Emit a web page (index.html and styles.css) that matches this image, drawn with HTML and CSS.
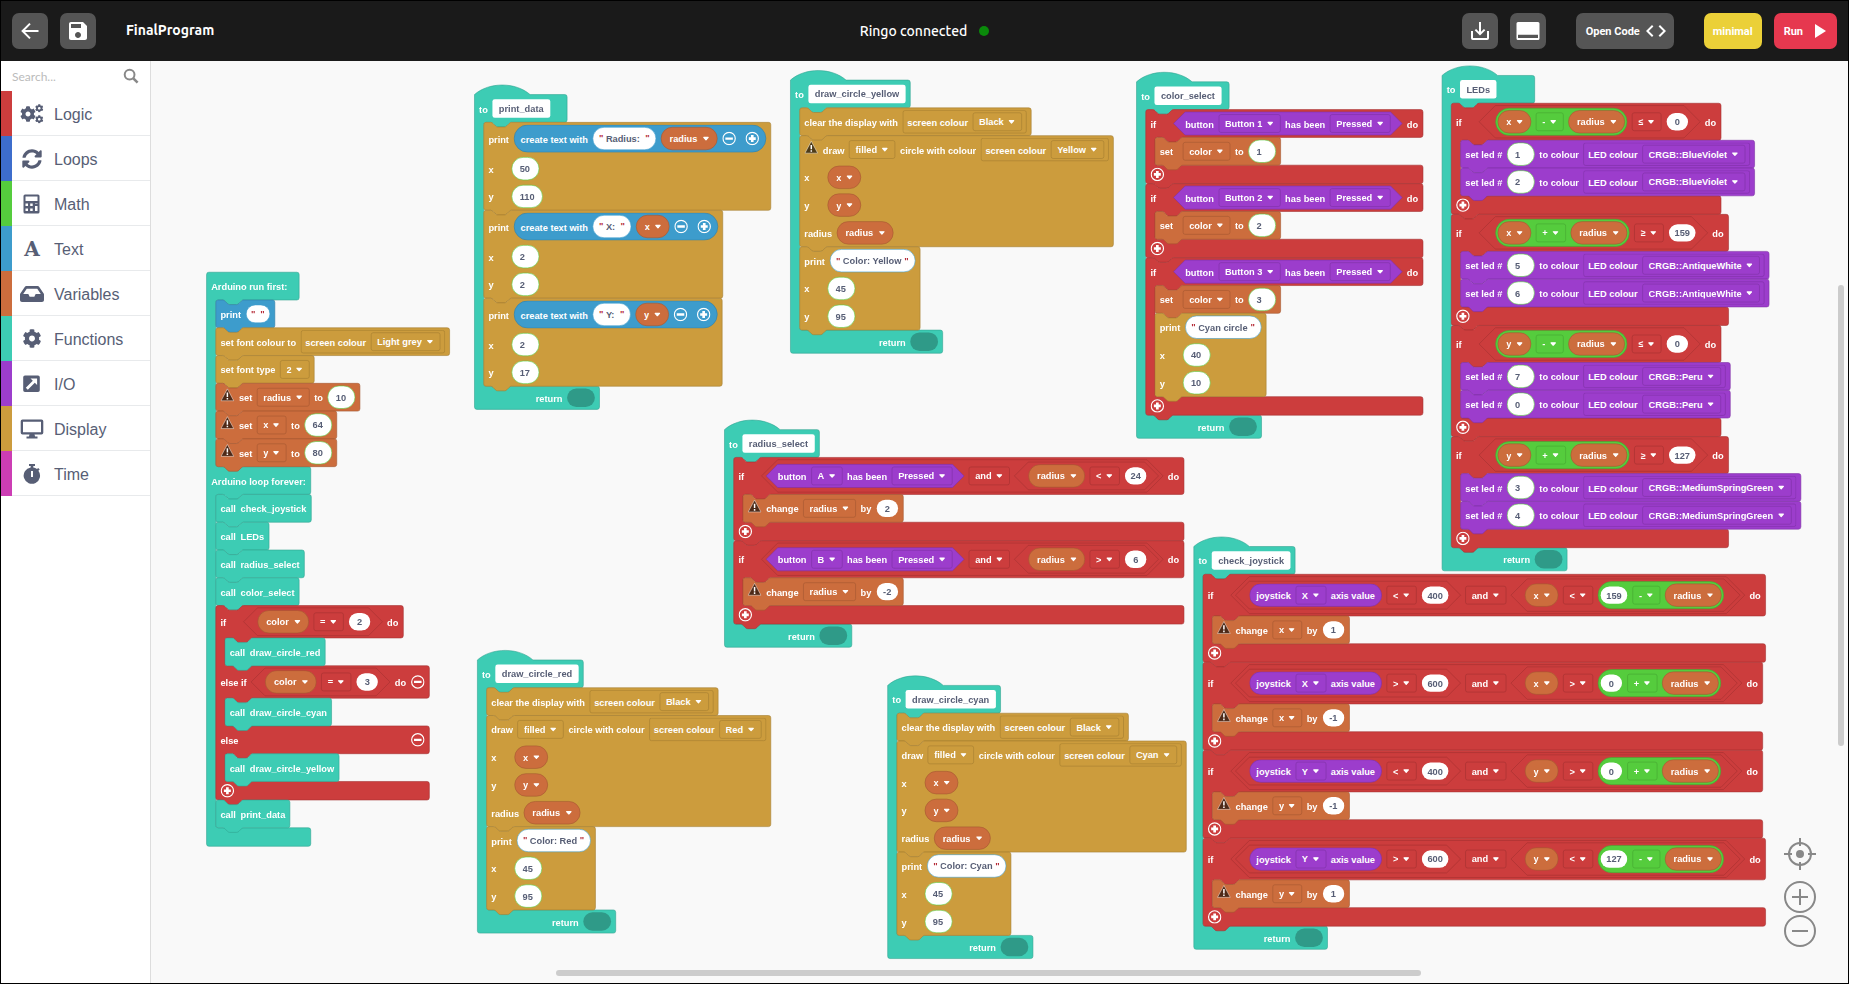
FILE: index.html
```html
<!DOCTYPE html>
<html lang="en">
<head>
<meta charset="utf-8">
<meta name="viewport" content="width=device-width, initial-scale=1">
<title>FinalProgram</title>
<link rel="stylesheet" href="styles.css">
</head>
<body>
<svg class="defs" aria-hidden="true">
  <symbol id="cog" viewBox="0 0 512 512"><path d="M487.4 315.7l-42.6-24.6c4.3-23.2 4.3-47 0-70.2l42.6-24.6c4.9-2.8 7.1-8.6 5.5-14-11.1-35.6-30-67.8-54.7-94.6-3.8-4.1-10-5.1-14.8-2.3L380.8 110c-17.9-15.4-38.5-27.3-60.8-35.1V25.8c0-5.6-3.9-10.5-9.4-11.7-36.7-8.2-74.3-7.8-109.2 0-5.5 1.2-9.4 6.1-9.4 11.7V75c-22.2 7.9-42.8 19.8-60.8 35.1L88.7 85.5c-4.9-2.8-11-1.9-14.8 2.3-24.7 26.7-43.6 58.9-54.7 94.6-1.7 5.4.6 11.2 5.5 14L67.3 221c-4.3 23.2-4.3 47 0 70.2l-42.6 24.6c-4.9 2.8-7.1 8.6-5.5 14 11.1 35.6 30 67.8 54.7 94.6 3.8 4.1 10 5.1 14.8 2.3l42.6-24.6c17.9 15.4 38.5 27.3 60.8 35.1v49.2c0 5.6 3.9 10.5 9.4 11.7 36.7 8.2 74.3 7.8 109.2 0 5.5-1.2 9.4-6.1 9.4-11.7v-49.2c22.2-7.9 42.8-19.8 60.8-35.1l42.6 24.6c4.9 2.8 11 1.9 14.8-2.3 24.7-26.7 43.6-58.9 54.7-94.6 1.5-5.5-.7-11.3-5.6-14.1zM256 336c-44.1 0-80-35.9-80-80s35.9-80 80-80 80 35.9 80 80-35.9 80-80 80z"/></symbol>
  <symbol id="plus" viewBox="0 0 24 24"><circle cx="12" cy="12" r="10.6" fill="none" stroke="#fff" stroke-width="2"/><path d="M12 6v12M6 12h12" stroke="#fff" stroke-width="4.6"/></symbol>
  <symbol id="minus" viewBox="0 0 24 24"><circle cx="12" cy="12" r="10.6" fill="none" stroke="#fff" stroke-width="2"/><path d="M5.5 12h13" stroke="#fff" stroke-width="4"/></symbol>
  <symbol id="warning" viewBox="0 0 24 24"><path d="M12 1.6 23 22.2H1z" fill="#000" fill-opacity=".62" stroke="#fff" stroke-opacity=".6" stroke-width="1.3" stroke-linejoin="round"/><path d="M12 8v7.500M12 17.2v2.8" stroke="#fff" stroke-width="2.6"/></symbol>
</svg>

<header class="topbar">
  <div class="topbar-left">
    <button class="tool" aria-label="Back"><svg viewBox="0 0 24 24" width="24" height="24"><path d="M20.5 12H5M12 4.6 4.6 12l7.4 7.4" fill="none" stroke="currentColor" stroke-width="2"/></svg></button>
    <button class="tool" aria-label="Save"><svg viewBox="0 0 24 24" width="24" height="24"><path fill="currentColor" d="M17 3H5c-1.11 0-2 .9-2 2v14c0 1.1.89 2 2 2h14c1.1 0 2-.9 2-2V7l-4-4zm-5 16c-1.66 0-3-1.34-3-3s1.34-3 3-3 3 1.34 3 3-1.34 3-3 3zm3-10H5V5h10v4z"/></svg></button>
    <h1 class="title">FinalProgram</h1>
  </div>
  <p class="status">Ringo connected <span class="dot"></span></p>
  <div class="topbar-right">
    <div class="group">
      <button class="tool" aria-label="Download"><svg viewBox="0 0 24 24" width="24" height="24"><path d="M4 12v7.2q0 .8.8.8h14.4q.8 0 .8-.8V12M12 3v12M7.4 10.6 12 15.2l4.6-4.6" fill="none" stroke="currentColor" stroke-width="2"/></svg></button>
      <button class="tool" aria-label="Toggle panel"><svg viewBox="0 0 24 24" width="24" height="24"><path fill="currentColor" fill-rule="evenodd" d="M2 3h20q1.500 0 1.500 1.500v15q0 1.500-1.500 1.500H2Q.5 21 .5 19.500v-15Q.5 3 2 3zm0 12.800v3.200h20v-3.200z"/></svg></button>
    </div>
    <button class="tool wide">Open Code <svg viewBox="0 0 24 24" width="24" height="24"><path fill="currentColor" d="M9.400 16.600L4.800 12l4.600-4.600L8 6l-6 6 6 6 1.400-1.400zm5.200 0l4.600-4.600-4.600-4.600L16 6l6 6-6 6-1.400-1.400z"/></svg></button>
    <div class="group">
      <button class="tool minimal">minimal</button>
      <button class="tool wide run">Run <svg viewBox="0 0 24 24" width="24" height="24"><path fill="currentColor" d="M8 5v14l11-7z"/></svg></button>
    </div>
  </div>
</header>

<div class="main">
  <aside class="sidebar">
    <form class="search" role="search">
      <input type="search" aria-label="Search blocks" placeholder="Search...">
      <button type="button" aria-label="Search"><svg viewBox="0 0 16 16" width="16" height="16"><circle cx="6.600" cy="6.600" r="4.900" fill="none" stroke="#888" stroke-width="2"/><path d="m10.300 10.300 4.300 4.300" stroke="#888" stroke-width="2.600"/></svg></button>
    </form>
    <nav class="categories" aria-label="Block categories">
      <a href="#logic" class="category c-logic"><svg viewBox="0 0 24 20"><use href="#cog" x="0" y="2" width="16" height="16"/><use href="#cog" x="15" y="0" width="8.500" height="8.500"/><use href="#cog" x="15" y="11" width="8.500" height="8.500"/></svg><span>Logic</span></a>
      <a href="#loops" class="category c-loops"><svg viewBox="-51 0 614 512"><path d="M370.720 133.280C339.458 104.008 298.888 87.962 255.848 88c-77.458.068-144.328 53.178-162.791 126.850-1.344 5.363-6.122 9.150-11.651 9.150H24.103c-7.498 0-13.194-6.807-11.807-14.176C33.933 94.924 134.813 8 256 8c66.448 0 126.791 26.136 171.315 68.685L463.030 40.970C478.149 25.851 504 36.559 504 57.941V192c0 13.255-10.745 24-24 24H345.941c-21.382 0-32.090-25.851-16.971-40.971l41.750-41.749zM32 296h134.059c21.382 0 32.090 25.851 16.971 40.971l-41.750 41.750c31.262 29.273 71.835 45.319 114.876 45.280 77.418-.070 144.315-53.144 162.787-126.849 1.344-5.363 6.122-9.150 11.651-9.150h57.304c7.498 0 13.194 6.807 11.807 14.176C478.067 417.076 377.187 504 256 504c-66.448 0-126.791-26.136-171.315-68.685L48.970 471.030C33.851 486.149 8 475.441 8 454.059V320c0-13.255 10.745-24 24-24z"/></svg><span>Loops</span></a>
      <a href="#math" class="category c-math"><svg viewBox="0 0 24 20"><path fill-rule="evenodd" d="M5 .5h13q1.500 0 1.500 1.500v16q0 1.500-1.500 1.500H5q-1.500 0-1.500-1.500V2Q3.500.5 5 .5zM5.500 2.500V7h12V2.500zM5.500 9.500V12H8V9.500zM10.200 9.500V12h2.500V9.500zM15 9.500V12h2.500V9.500zM5.500 14.500V17H8v-2.500zM10.200 14.500V17h2.500v-2.500zM15 10v7h2.500v-7z"/></svg><span>Math</span></a>
      <a href="#text" class="category c-text"><b class="letter" aria-hidden="true">A</b><span>Text</span></a>
      <a href="#variables" class="category c-variables"><svg viewBox="0 16 576 480"><path d="M567.938 243.908L462.250 85.374A48.003 48.003 0 0 0 422.311 64H153.689a48 48 0 0 0-39.938 21.374L8.062 243.908A47.994 47.994 0 0 0 0 270.533V400c0 26.510 21.490 48 48 48h480c26.510 0 48-21.490 48-48V270.533a47.994 47.994 0 0 0-8.062-26.625zM162.252 128h251.497l85.333 128H376l-32 64H232l-32-64H76.918l85.334-128z"/></svg><span>Variables</span></a>
      <a href="#functions" class="category c-functions"><svg viewBox="0 0 24 20"><use href="#cog" x="2.500" y="0" width="19" height="19"/></svg><span>Functions</span></a>
      <a href="#io" class="category c-io"><svg viewBox="0 0 24 20"><path fill-rule="evenodd" d="M5 1.500h13q1.800 0 1.800 1.800v13q0 1.800-1.800 1.800H5q-1.800 0-1.800-1.800v-13Q3.200 1.500 5 1.500zM10.500 4.500l2.300 2.300-7 7 2 2 7-7 2.300 2.300V4.500z"/></svg><span>I/O</span></a>
      <a href="#display" class="category c-display"><svg viewBox="0 0 24 20"><path fill-rule="evenodd" d="M2.500.5h19Q23.300.5 23.300 2.300v11.500q0 1.800-1.800 1.800h-7l.6 2h2.400v1.900H6.500v-1.900h2.400l.6-2h-7q-1.800 0-1.800-1.800V2.300Q.7.5 2.500.5zM3 2.800v10.500h18V2.800z"/></svg><span>Display</span></a>
      <a href="#time" class="category c-time"><svg viewBox="0 0 24 20"><path fill-rule="evenodd" d="M9 0h6v2h-1.700v1.500a8 8 0 0 1 3.700 1.600l1.200-1.200 1.500 1.500-1.300 1.300A8.200 8.200 0 1 1 10.700 3.500V2H9zM11 7v6h2V7z"/></svg><span>Time</span></a>
    </nav>
  </aside>

  <main class="workspace">
    <div class="canvas" id="canvas"></div>
    <div class="scroll-y"></div>
    <div class="scroll-x"></div>
    <div class="controls">
      <button aria-label="Center blocks"><svg viewBox="0 0 32 32" width="32" height="32"><circle cx="16" cy="16" r="11"/><path d="M16 0v8M16 24v8M0 16h8M24 16h8"/><circle class="solid" cx="16" cy="16" r="4"/></svg></button>
      <button aria-label="Zoom in"><svg viewBox="0 0 32 32" width="32" height="32"><circle cx="16" cy="16" r="15"/><path d="M16 8v16M8 16h16"/></svg></button>
      <button aria-label="Zoom out"><svg viewBox="0 0 32 32" width="32" height="32"><circle cx="16" cy="16" r="15"/><path d="M8 16h16"/></svg></button>
    </div>
  </main>
</div>
<script src="blocks.js"></script>
</body>
</html>
```

FILE: styles.css
```css
* { box-sizing: border-box; }

:root {
  --logic: #cc3d3d;
  --loops: #3d6dcc;
  --math: #55cc3d;
  --text: #3d9ccc;
  --variables: #cc6d3d;
  --functions: #3dccb4;
  --io: #9c3dcc;
  --display: #cc9c3d;
  --time: #cc3db4;
  --ink: #575e75;
  --zoom: 0.5787;
}

body {
  margin: 0;
  height: 100vh;
  display: flex;
  flex-direction: column;
  border: 1px solid #000;
  overflow: hidden;
  background: #f9f9f9;
  font-family: "Liberation Sans", Arial, sans-serif;
}

button, input, select { font: inherit; color: inherit; margin: 0; border: 0; padding: 0; }
button { cursor: pointer; }
.defs { position: absolute; width: 0; height: 0; }

/* Top bar */
.topbar {
  display: grid;
  grid-template-columns: 1fr auto 1fr;
  align-items: center;
  height: 60px;
  flex: none;
  padding: 0 11px;
  background: #1a1a1a;
  color: #fff;
}
.topbar-left { display: flex; align-items: center; gap: 12px; }
.topbar-right { display: flex; justify-content: flex-end; gap: 30px; }
.group { display: flex; gap: 12px; }
.title, .status { margin: 0; font-family: Ubuntu, "Noto Sans", sans-serif; }
.title { margin-left: 18px; padding-bottom: 2px; font-size: 14px; font-weight: 600; }
.status { display: flex; align-items: center; gap: 12px; font-size: 14px; font-weight: 500; }
.dot { width: 10px; height: 10px; border-radius: 50%; background: #0a8a0a; }
.tool {
  display: flex;
  align-items: center;
  justify-content: center;
  min-width: 36px;
  height: 36px;
  border-radius: 7px;
  background: #555;
  color: #fff;
  font: bold 11px Roboto, sans-serif;
}
.tool.wide { padding: 0 6px 0 10px; gap: 4px; }
.tool.run { background: #e6384f; }
.tool.minimal { padding: 0 9px; background: #ebd038; }

/* Side bar */
.main { display: flex; flex: 1; min-height: 0; }
.sidebar {
  flex: none;
  width: 150px;
  background: #fff;
  border-right: 1px solid #ddd;
}
.search { display: flex; align-items: center; height: 30px; padding: 0 11px; }
.search input {
  flex: 1;
  min-width: 0;
  background: none;
  outline: none;
  font: 12px Lato, sans-serif;
}
.search input::placeholder { color: #bbb; }
.search button { display: flex; background: none; }
.category {
  display: flex;
  align-items: center;
  height: 45px;
  padding-left: 8px;
  border-left: 11px solid var(--c);
  color: var(--ink);
  font-size: 16px;
  text-decoration: none;
  background: linear-gradient(#e8eaec, #e8eaec) bottom / 100% 1px no-repeat;
}
.category span { padding-top: 2px; }
.category svg { width: 24px; height: 20px; margin-right: 10px; fill: var(--ink); }
.letter {
  width: 24px;
  margin-right: 10px;
  text-align: center;
  font: bold 20px/20px "DejaVu Serif", serif;
}
.c-logic { --c: var(--logic); }
.c-loops { --c: var(--loops); }
.c-math { --c: var(--math); }
.c-text { --c: var(--text); }
.c-variables { --c: var(--variables); }
.c-functions { --c: var(--functions); }
.c-io { --c: var(--io); }
.c-display { --c: var(--display); }
.c-time { --c: var(--time); }

/* Workspace */
.workspace { position: relative; flex: 1; min-width: 0; overflow: hidden; }
.scroll-x, .scroll-y { position: absolute; border-radius: 3px; background: #ccc; }
.scroll-y { right: 4px; top: 224px; width: 6px; height: 50%; }
.scroll-x { bottom: 7px; left: 405px; width: 51%; height: 6px; }
.controls {
  position: absolute;
  right: 32px;
  bottom: 36px;
  display: flex;
  flex-direction: column;
  gap: 2px;
}
.controls button { display: flex; background: none; }
.controls button:first-child { margin-bottom: 9px; }
.controls svg { fill: none; stroke: #888; stroke-width: 2; }
.controls .solid { fill: #888; stroke: none; }

/* Block canvas: sizes below are workspace units, shown at the current zoom */
.canvas {
  position: absolute;
  left: 0;
  top: 0;
  transform: scale(var(--zoom));
  transform-origin: 0 0;
  color: #fff;
  font-size: 16px;
  font-weight: bold;
  line-height: 20px;
  white-space: pre;
}
.root { position: absolute; }
.block {
  position: relative;
  display: flex;
  flex-direction: column;
  align-items: flex-start;
  width: max-content;
}
.outline {
  position: absolute;
  left: 0;
  top: 0;
  width: 1px;
  height: 1px;
  overflow: visible;
  fill: var(--c);
  stroke: color-mix(in srgb, var(--c) 80%, #000);
}
.line {
  position: relative;
  display: flex;
  align-items: center;
  gap: 8px;
  min-height: 48px;
  padding: 4px 8px;
}
.flat > .line, .line.fill { align-self: stretch; }
.line.foot { min-height: 32px; }
.line.between { justify-content: space-between; }
.line.hat { min-width: 160px; }
.function > .hat { margin-right: 56px; }
.line.return { align-self: stretch; justify-content: flex-end; min-height: 40px; }
.body { width: 0; margin-left: 16px; }
.label { padding-top: 3px; }
.lead { min-width: 32px; }
.socket { width: 48px; height: 32px; border-radius: 16px; background: #2f9a88; }
.icon { display: block; width: 24px; height: 24px; background: none; }
.icon svg, .warn { display: block; width: 24px; height: 24px; }
.warn { margin-bottom: 8px; }
.round .icon + .icon { margin-left: 8px; }

.round, .square, .hex {
  position: relative;
  display: flex;
  align-items: center;
  gap: 8px;
  min-height: 40px;
}
.round, .square {
  border: 1px solid color-mix(in srgb, var(--c) 80%, #000);
  background-color: var(--c);
}
.square { padding: 3px 7px; border-radius: 4px; }
.round { padding: 3px 11px; border-radius: 28px; }
.round.math { padding: 3px; }
.hex { padding: 4px 20px; }
.hex > * { position: relative; }
.hex > .outline { position: absolute; }
.hex > .outline + .round { margin-left: 4px; }
.hex > .outline + .math { margin-left: 8px; }
.hex > .math:last-child { margin-right: 8px; }
.hex > .outline + .hex { margin-left: -12px; }
.hex > .hex:last-child { margin-right: -12px; }

.menu {
  appearance: none;
  height: 32px;
  padding: 2px 30px 0 10px;
  border: 1px solid color-mix(in srgb, var(--c) 80%, #000);
  border-radius: 4px;
  background: url("data:image/svg+xml,%3Csvg xmlns='http://www.w3.org/2000/svg' viewBox='0 0 12 12'%3E%3Cpath d='M2.200 4h7.600L6 8.200z' fill='%23fff' stroke='%23fff' stroke-width='2' stroke-linejoin='round'/%3E%3C/svg%3E") right 11px center / 12px 12px no-repeat;
}
.menu.variable {
  height: 40px;
  padding: 2px 33px 0 14px;
  border-radius: 20px;
  background-color: var(--c);
  background-position: right 13px center;
}
.name, .number, .string { color: var(--ink); background: #fff; }
.name { height: 32px; padding: 2px 11px 0; border-radius: 4px; }
.number {
  height: 40px;
  min-width: 48px;
  padding: 2px 13px 0;
  border: 1px solid var(--math);
  border-radius: 20px;
}
.number.inner {
  height: 32px;
  min-width: 39px;
  padding: 2px 9px 0;
  border-color: transparent;
  background-clip: padding-box;
  text-align: center;
}
.string {
  display: flex;
  align-items: center;
  gap: 4px;
  height: 40px;
  padding: 0 10px;
  border: 1px solid var(--text);
  border-radius: 20px;
}
.string.empty { height: 32px; padding: 0 8px; }
.string input { padding-top: 2px; background: none; }
.string .quote { width: 8px; color: #b52a36; text-align: center; }
```

FILE: blocks.js
```js
const pen = document.createElement('canvas').getContext('2d');
pen.font = 'bold 16px "Liberation Sans", Arial, sans-serif';
const textWidth = (s) => Math.ceil(pen.measureText(s).width);

/* Fields */
const label = (s, cls = '') => `<span class="label ${cls}">${s}</span>`;
const lead = (s) => label(s, 'lead');
const menu = (s, name = 'option') => `<select class="menu" aria-label="${name}"><option>${s}</option></select>`;
const number = (n, cls = '') => {
  const pad = cls ? 21 : 28;
  return `<input class="number ${cls}" aria-label="number" value="${n}" style="width:${textWidth(String(n)) + pad}px">`;
};
const inner = (n) => number(n, 'inner');
const string = (s) => `<span class="string ${s ? '' : 'empty'}"><span class="quote">"</span>` +
  `<input aria-label="text" value="${s}" style="width:${textWidth(s)}px"><span class="quote">"</span></span>`;
const plus = '<button class="icon" aria-label="Add"><svg><use href="#plus"/></svg></button>';
const minus = '<button class="icon" aria-label="Remove"><svg><use href="#minus"/></svg></button>';
const warn = '<svg class="warn" role="img" aria-label="Warning"><use href="#warning"/></svg>';

/* Reporters */
const variable = (s) => `<select class="menu variable round c-variables" aria-label="variable"><option>${s}</option></select>`;
const square = (c, ...parts) => `<span class="square c-${c}">${parts.join('')}</span>`;
const round = (c, ...parts) => `<span class="round c-${c}">${parts.join('')}</span>`;
const math = (a, op, b) => `<span class="round math c-math">${a}${menu(op, 'operator')}${b}</span>`;
const hex = (c, ...parts) => `<span class="hex c-${c}">${parts.join('')}</span>`;
const compare = (a, op, b) => hex('logic', a, menu(op, 'comparison'), b);
const and = (a, b) => hex('logic', a, menu('and', 'operator'), b);
const pressed = (b) => hex('io', label('button'), menu(b, 'button'), label('has been'), menu('Pressed', 'state'));
const joystick = (axis) => round('io', label('joystick'), menu(axis, 'axis'), label('axis value'));
const screen = (s) => square('display', label('screen colour'), menu(s, 'colour'));
const join = (s, v) => round('text', label('create text with'), string(s), variable(v), minus, plus);

/* Statements */
const line = (cls, ...parts) => `<div class="line ${cls}">${parts.join('')}</div>`;
const body = (...blocks) => `<div class="body">${blocks.join('')}</div>`;
const block = (c, cls, ...lines) => `<div class="block ${cls} c-${c}">${lines.join('')}</div>`;
const flat = (c, ...lines) => block(c, 'flat', ...lines);

const call = (name) => flat('functions', line('', label('call'), label(name)));
const set = (v, n, w = '') => flat('variables', line('', w, w ? label('set') : lead('set'), menu(v, 'variable'), label('to'), number(n)));
const change = (v, n) => flat('variables', line('', warn, label('change'), menu(v, 'variable'), label('by'), inner(n)));
const led = (n, colour) => flat('io', line('', label('set led #'), number(n), label('to colour'),
  square('io', label('LED colour'), menu('CRGB::' + colour, 'colour'))));
const print = (what, x, y) => flat('display', line('', lead('print'), what),
  line('', lead('x'), number(x)), line('', lead('y'), number(y)));
const clear = flat('display', line('', label('clear the display with'), screen('Black')));
const circle = (colour, w = '') => flat('display',
  line('', w, label('draw'), menu('filled', 'fill'), label('circle with colour'), screen(colour)),
  line('', lead('x'), variable('x')), line('', lead('y'), variable('y')),
  line('', lead('radius'), variable('radius')));
const when = (test, ...blocks) => block('logic', '', line('', lead('if'), test, label('do')),
  body(...blocks), line('foot fill', plus));
const define = (name, ...blocks) => block('functions', 'function',
  line('hat', label('to'), `<input class="name" aria-label="function name" value="${name}" style="width:${textWidth(name) + 22}px">`),
  body(...blocks), line('return', label('return'), '<span class="socket"></span>'));

const v = variable;
const program = [
  [96, 365, block('functions', 'start',
    line('hat', label('Arduino run first:')),
    body(
      flat('text', line('', label('print'), string(''))),
      flat('display', line('', label('set font colour to'), screen('Light grey'))),
      flat('display', line('', label('set font type'), menu('2', 'font type'))),
      set('radius', 10, warn), set('x', 64, warn), set('y', 80, warn)),
    line('', label('Arduino loop forever:')),
    body(
      call('check_joystick'), call('LEDs'), call('radius_select'), call('color_select'),
      block('logic', '',
        line('', lead('if'), compare(v('color'), '=', inner(2)), label('do')),
        body(call('draw_circle_red')),
        line('', lead('else if'), compare(v('color'), '=', inner(3)), label('do'), minus),
        body(call('draw_circle_cyan')),
        line('fill between', label('else'), minus),
        body(call('draw_circle_yellow')),
        line('foot fill', plus)),
      call('print_data')),
    line('foot fill'))],
  [559, 58, define('print_data',
    print(join('Radius: ', 'radius'), 50, 110),
    print(join('X: ', 'x'), 2, 2),
    print(join('Y: ', 'y'), 2, 17))],
  [1105, 33, define('draw_circle_yellow', clear, circle('Yellow', warn), print(string('Color: Yellow'), 45, 95))],
  [1703, 36, define('color_select',
    when(pressed('Button 1'), set('color', 1)),
    when(pressed('Button 2'), set('color', 2)),
    when(pressed('Button 3'), set('color', 3), print(string('Cyan circle'), 40, 10)))],
  [2231, 25, define('LEDs',
    when(compare(math(v('x'), '-', v('radius')), '≤', inner(0)), led(1, 'BlueViolet'), led(2, 'BlueViolet')),
    when(compare(math(v('x'), '+', v('radius')), '≥', inner(159)), led(5, 'AntiqueWhite'), led(6, 'AntiqueWhite')),
    when(compare(math(v('y'), '-', v('radius')), '≤', inner(0)), led(7, 'Peru'), led(0, 'Peru')),
    when(compare(math(v('y'), '+', v('radius')), '≥', inner(127)), led(3, 'MediumSpringGreen'), led(4, 'MediumSpringGreen')))],
  [991, 637, define('radius_select',
    when(and(pressed('A'), compare(v('radius'), '&lt;', inner(24))), change('radius', 2)),
    when(and(pressed('B'), compare(v('radius'), '&gt;', inner(6))), change('radius', -2)))],
  [1802, 839, define('check_joystick',
    when(and(compare(joystick('X'), '&lt;', inner(400)), compare(v('x'), '&lt;', math(inner(159), '-', v('radius')))), change('x', 1)),
    when(and(compare(joystick('X'), '&gt;', inner(600)), compare(v('x'), '&gt;', math(inner(0), '+', v('radius')))), change('x', -1)),
    when(and(compare(joystick('Y'), '&lt;', inner(400)), compare(v('y'), '&gt;', math(inner(0), '+', v('radius')))), change('y', -1)),
    when(and(compare(joystick('Y'), '&gt;', inner(600)), compare(v('y'), '&lt;', math(inner(127), '-', v('radius')))), change('y', 1)))],
  [564, 1035, define('draw_circle_red', clear, circle('Red'), print(string('Color: Red'), 45, 95))],
  [1273, 1079, define('draw_circle_cyan', clear, circle('Cyan'), print(string('Color: Cyan'), 45, 95))],
];

const canvas = document.getElementById('canvas');
canvas.innerHTML = program
  .map(([x, y, html]) => `<div class="root" style="left:${x}px;top:${y}px">${html}</div>`).join('');

/* Outlines: notched stacks and hexagons, traced round the laid-out lines */
const NOTCH_RIGHT = 'c2,0 3,1 4,2 l4,4 c1,1 2,2 4,2 h12 c2,0 3,-1 4,-2 l4,-4 c1,-1 2,-2 4,-2';
const NOTCH_LEFT = 'c-2,0 -3,1 -4,2 l-4,4 c-1,1 -2,2 -4,2 h-12 c-2,0 -3,-1 -4,-2 l-4,-4 c-1,-1 -2,-2 -4,-2';

function stackPath(el) {
  const parts = [...el.children];
  let d = 'M0,4 a4,4 0 0 1 4,-4 ';
  if (el.classList.contains('function')) d = 'M0,0 c25,-22 71,-22 96,0 ';
  else if (!el.classList.contains('start')) d += 'h8 ' + NOTCH_RIGHT;
  d += `H${parts[0].offsetWidth - 4} a4,4 0 0 1 4,4 `;
  parts.forEach((part, i) => {
    const end = part.offsetTop + part.offsetHeight;
    const next = parts[i + 1];
    if (part.classList.contains('body')) {
      d += `H20 a4,4 0 0 0 -4,4 V${end - 4} a4,4 0 0 0 4,4 H${next.offsetWidth - 4} a4,4 0 0 1 4,4 `;
    } else if (!next) {
      d += `V${end - 4} a4,4 0 0 1 -4,4 `;
    } else if (next.classList.contains('body')) {
      d += `V${end - 4} a4,4 0 0 1 -4,4 H64 ${NOTCH_LEFT} `;
    }
  });
  if (!el.classList.contains('function') && !el.classList.contains('start')) d += 'H48 ' + NOTCH_LEFT;
  return d + 'H4 a4,4 0 0 1 -4,-4 z';
}

function hexPath(el) {
  const w = el.offsetWidth, h = el.offsetHeight, s = h / 2;
  return `M${s},0 H${w - s} L${w},${s} L${w - s},${h} H${s} L0,${s} z`;
}

function addOutline(el, d) {
  el.insertAdjacentHTML('afterbegin', `<svg class="outline" aria-hidden="true"><path d="${d}"/></svg>`);
}

const hexes = [...canvas.querySelectorAll('.hex')];
hexes.forEach((el) => addOutline(el, ''));
const stacks = [...canvas.querySelectorAll('.block')].map((el) => [el, stackPath(el)]);
stacks.forEach(([el, d]) => addOutline(el, d));
hexes.forEach((el) => el.firstChild.firstChild.setAttribute('d', hexPath(el)));
```
